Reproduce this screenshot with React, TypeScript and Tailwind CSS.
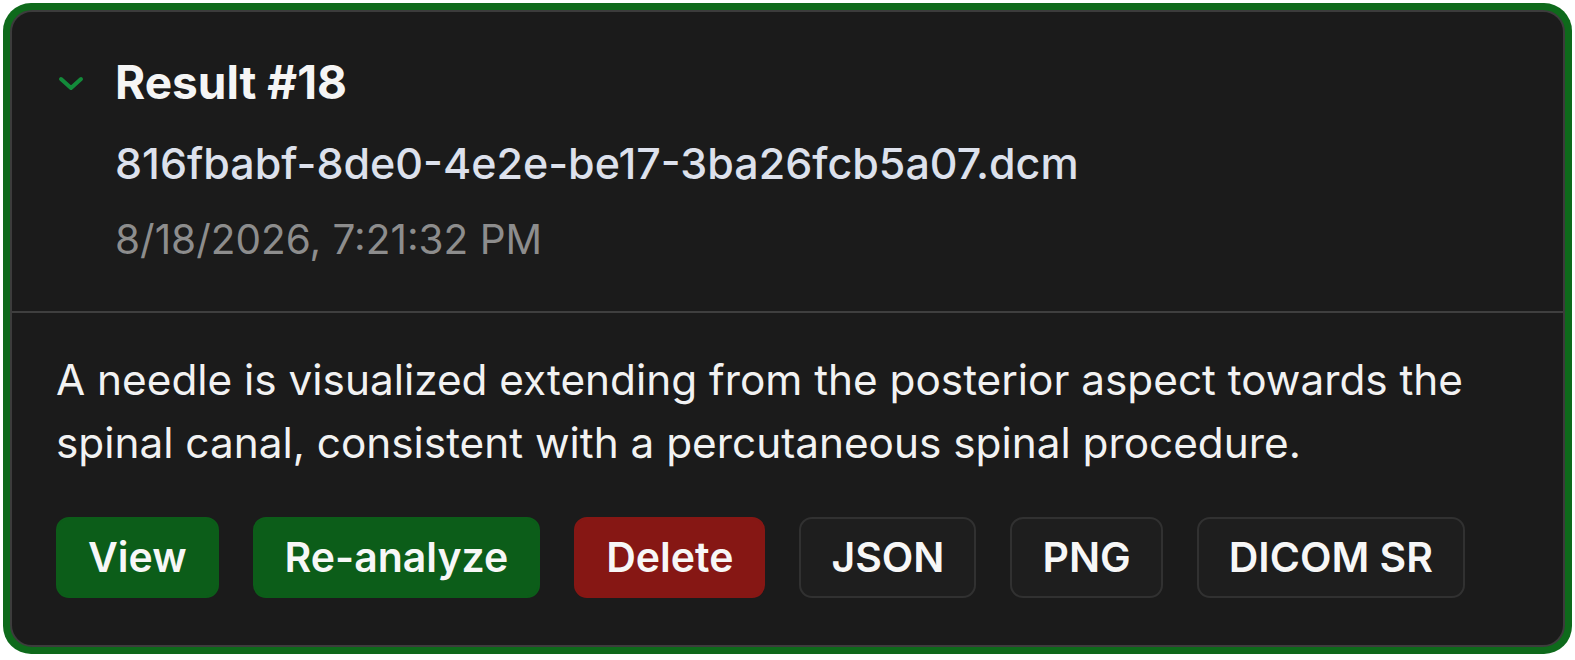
import React from 'react';

const buttons = [
  { label: 'View', kind: 'green' },
  { label: 'Re-analyze', kind: 'green' },
  { label: 'Delete', kind: 'red' },
  { label: 'JSON', kind: 'ghost' },
  { label: 'PNG', kind: 'ghost' },
  { label: 'DICOM SR', kind: 'ghost' },
];

const kindClass: Record<string, string> = {
  green: 'bg-[#0c5d19] border-[#0c5d19]',
  red: 'bg-[#861714] border-[#861714]',
  ghost: 'bg-[#1e1e1e] border-[#313131]',
};

export default function App() {
  return (
    <div
      className="w-full h-[660px] bg-white p-[3px]"
      style={{ fontFamily: 'Inter, "Noto Sans", sans-serif' }}
    >
      <div className="h-[651px] rounded-[28px] bg-[#0e6a1b] p-[7px]">
        <div className="h-full rounded-[22px] border-2 border-[#3c3c3c] bg-[#1b1b1b] flex flex-col overflow-hidden">
          <div className="pl-[46px] pt-[44px] pb-[48px] border-b-2 border-[#3f3f3f]">
            <div className="flex items-center h-[52px]">
              <svg width="26" height="16" viewBox="0 0 26 16" className="mr-[31px] mt-[2px]">
                <path d="M3 4 L13 13 L23 4" fill="none" stroke="#138a3a" strokeWidth="4" strokeLinecap="round" strokeLinejoin="round" />
              </svg>
              <span className="text-[46px] leading-[52px] font-bold text-[#f5f5f5]">Result #18</span>
            </div>
            <div className="pl-[57px] mt-[30px] text-[43px] leading-[50px] font-medium text-[#dde1ec]">
              816fbabf-8de0-4e2e-be17-3ba26fcb5a07.dcm
            </div>
            <div className="pl-[57px] mt-[29px] text-[40.5px] leading-[46px] text-[#8d8d8d]">
              8/18/2026, 7:21:32 PM
            </div>
          </div>
          <div className="px-[44px] pt-[35px]">
            <p className="text-[42.3px] leading-[63px] text-[#f2f2f2]">
              A needle is visualized extending from the posterior aspect towards the spinal canal, consistent with a percutaneous spinal procedure.
            </p>
            <div className="flex gap-[34px] mt-[43px]">
              {buttons.map((b) => (
                <button
                  key={b.label}
                  className={`h-[81px] px-[30px] rounded-[13px] border-2 text-[41px] font-semibold text-[#f7f7f7] ${kindClass[b.kind]}`}
                >
                  {b.label}
                </button>
              ))}
            </div>
          </div>
        </div>
      </div>
    </div>
  );
}
